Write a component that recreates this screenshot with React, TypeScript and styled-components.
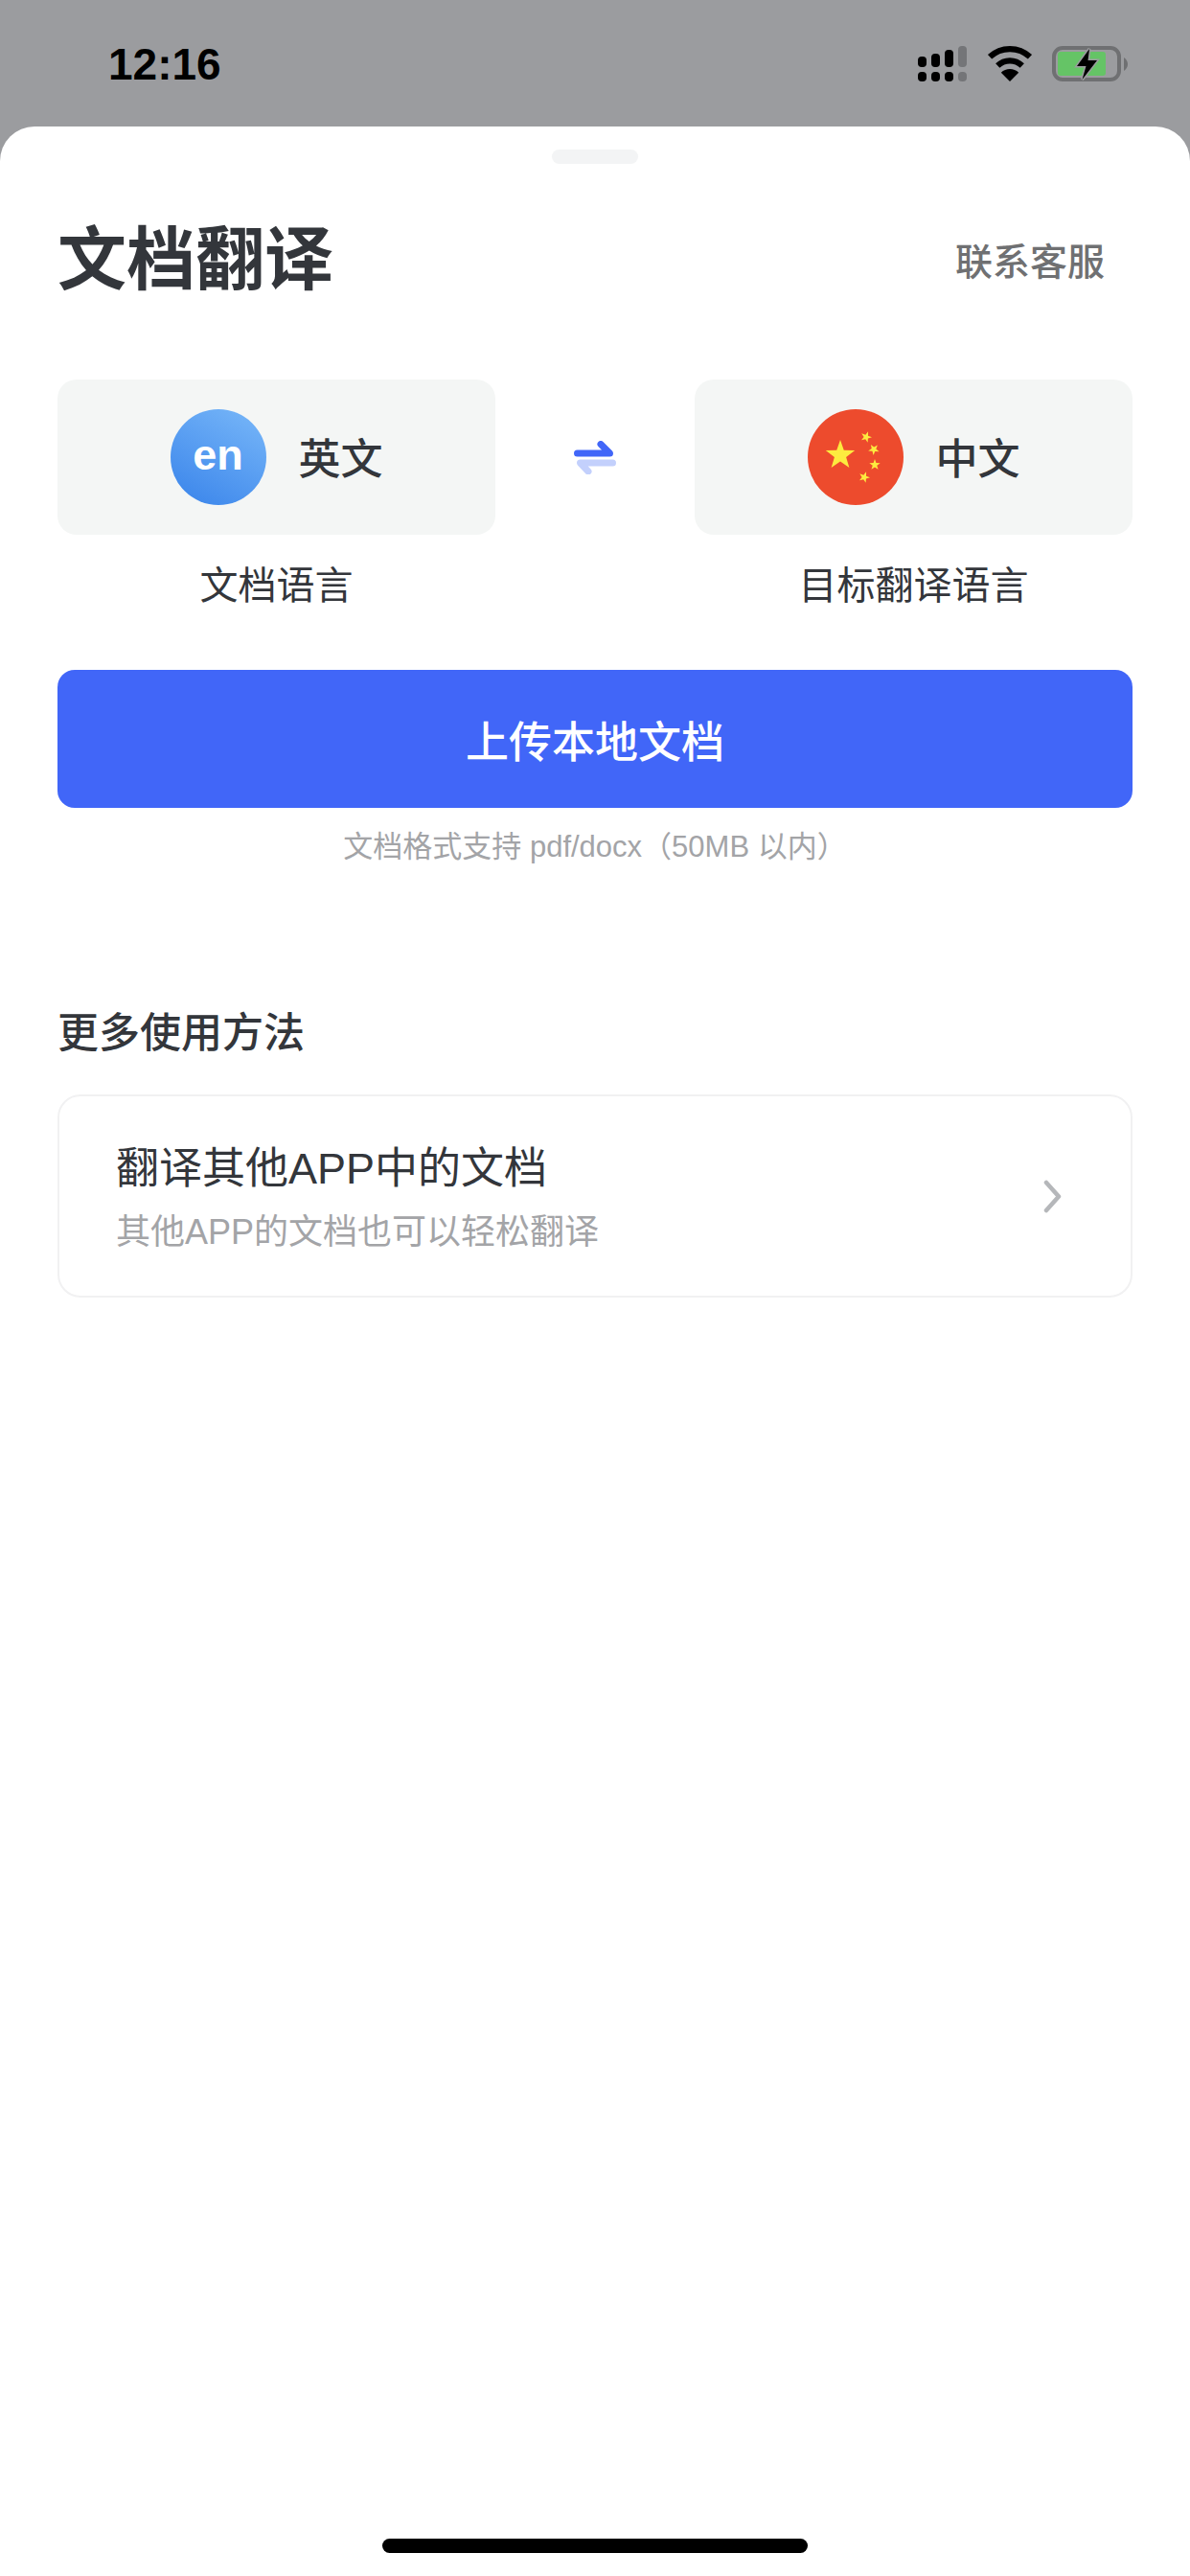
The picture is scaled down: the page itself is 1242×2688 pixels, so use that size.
import React from "react";
import styled, { createGlobalStyle } from "styled-components";

const UI_FONT = `"Liberation Sans", "Noto Sans CJK SC", sans-serif`;

const GlobalStyle = createGlobalStyle`
  html, body {
    margin: 0;
    padding: 0;
    background: #9b9c9f;
    font-family: ${UI_FONT};
  }
`;

const Page = styled.div`
  width: 1242px;
  height: 2688px;
  display: flex;
  flex-direction: column;
  background: #9b9c9f;
  overflow: hidden;
`;

const StatusBar = styled.div`
  height: 132px;
  box-sizing: border-box;
  padding: 40px 64px 0 113px;
  display: flex;
  justify-content: space-between;
  align-items: flex-start;
  flex-shrink: 0;
`;

const Clock = styled.div`
  font-size: 46px;
  font-weight: 700;
  line-height: 54px;
  color: #000;
`;

const StatusIcons = styled.div`
  display: flex;
  align-items: flex-start;
  gap: 20px;
  margin-top: 8px;
`;

const Sheet = styled.div`
  flex: 1;
  display: flex;
  flex-direction: column;
  background: #fff;
  border-radius: 36px 36px 0 0;
  padding: 24px 60px 24px;
`;

const Handle = styled.div`
  width: 90px;
  height: 15px;
  border-radius: 8px;
  background: #f3f4f5;
  align-self: center;
  flex-shrink: 0;
`;

const Header = styled.div`
  margin-top: 55px;
  display: flex;
  justify-content: space-between;
  align-items: center;
  height: 90px;
  padding-right: 29px;
`;

const Title = styled.h1`
  margin: 0;
  font-size: 72px;
  font-weight: 700;
  line-height: 90px;
  color: #33363b;
`;

const ContactLink = styled.a`
  font-size: 39px;
  font-weight: 500;
  line-height: 50px;
  color: #6f7072;
  padding-top: 6px;
`;

const LangRow = styled.div`
  margin-top: 80px;
  display: grid;
  grid-template-columns: 457px 1fr 457px;
`;

const LangColumn = styled.div`
  display: flex;
  flex-direction: column;
  align-items: center;
`;

const LangCard = styled.div`
  width: 100%;
  height: 162px;
  border-radius: 20px;
  background: #f4f6f5;
  display: flex;
  align-items: center;
  justify-content: center;
  gap: 34px;
`;

const LangBadge = styled.div`
  width: 100px;
  height: 100px;
  border-radius: 50%;
  background: linear-gradient(30deg, #3883ea 0%, #79b8f9 100%);
  display: flex;
  align-items: center;
  justify-content: center;
  font-size: 45px;
  font-weight: 700;
  line-height: 1;
  padding-bottom: 6px;
  box-sizing: border-box;
  color: #fff;
`;

const LangName = styled.span`
  font-size: 44px;
  font-weight: 500;
  line-height: 56px;
  color: #33363b;
  padding-top: 6px;
`;

const LangLabel = styled.div`
  margin-top: 28px;
  font-size: 40px;
  line-height: 50px;
  color: #33363b;
`;

const SwapCell = styled.div`
  height: 162px;
  display: flex;
  align-items: center;
  justify-content: center;
`;

const UploadButton = styled.button`
  margin-top: 63px;
  width: 100%;
  height: 144px;
  border: none;
  border-radius: 18px;
  background: #4166f8;
  color: #fff;
  font-family: ${UI_FONT};
  font-size: 45px;
  font-weight: 500;
  flex-shrink: 0;
`;

const FormatHint = styled.div`
  margin-top: 20px;
  text-align: center;
  font-size: 31px;
  line-height: 42px;
  color: #a3a4a7;
`;

const SectionTitle = styled.h2`
  margin: 0;
  margin-top: 146px;
  font-size: 43px;
  font-weight: 500;
  line-height: 54px;
  color: #33363b;
`;

const MethodCard = styled.div`
  margin-top: 37px;
  height: 212px;
  box-sizing: border-box;
  border: 2px solid #f1f1f2;
  border-radius: 24px;
  padding: 0 72px 0 59px;
  display: flex;
  align-items: center;
  justify-content: space-between;
  flex-shrink: 0;
`;

const MethodText = styled.div`
  display: flex;
  flex-direction: column;
  gap: 15px;
  padding-top: 5px;
`;

const MethodTitle = styled.div`
  font-size: 45px;
  line-height: 56px;
  color: #33363b;
`;

const MethodSub = styled.div`
  font-size: 36px;
  line-height: 46px;
  color: #a3a4a7;
`;

const HomeBar = styled.div`
  margin-top: auto;
  width: 444px;
  height: 15px;
  border-radius: 8px;
  background: #000;
  align-self: center;
  flex-shrink: 0;
`;

const SIGNAL_BARS = [
  { x: 0, top: 11, fill: "#000" },
  { x: 14, top: 8, fill: "#000" },
  { x: 28, top: 4, fill: "#000" },
  { x: 42, top: 0, fill: "#747578" },
];

function SignalIcon() {
  return (
    <svg width="52" height="38" viewBox="0 0 52 38">
      {SIGNAL_BARS.map((bar) => (
        <g key={bar.x} fill={bar.fill}>
          <rect x={bar.x} y={bar.top} width="9" height={22 - bar.top} rx="4" />
          <rect x={bar.x} y="27" width="9" height="10" rx="4" />
        </g>
      ))}
    </svg>
  );
}

function WifiIcon() {
  return (
    <svg width="48" height="37" viewBox="0 0 47 36" fill="none" stroke="#000" strokeWidth="6">
      <path d="M3 11A30 30 0 0 1 44 11" />
      <path d="M11 20A18 18 0 0 1 36 20" />
      <path d="M14.5 27A13 13 0 0 1 32.5 27L23.5 36Z" fill="#000" stroke="none" />
    </svg>
  );
}

function BatteryIcon() {
  return (
    <svg width="80" height="38" viewBox="0 0 80 38">
      <rect x="2" y="2" width="68" height="33" rx="9" fill="none" stroke="#6f7072" strokeWidth="4" />
      <rect x="6" y="6" width="50" height="25" rx="3" fill="#65c466" />
      <path d="M75 12q4 3 4 7t-4 7z" fill="#6f7072" />
      <path
        d="M39 3L26 21H35.500L31.500 35L47 15H37.500Z"
        fill="#000"
        stroke="#9b9c9f"
        strokeWidth="3"
        paintOrder="stroke"
      />
    </svg>
  );
}

function SwapIcon() {
  return (
    <svg width="44" height="35" viewBox="0 0 44 35" fill="none" strokeWidth="7" strokeLinecap="round" strokeLinejoin="round">
      <path d="M3.500 13H37.500L28 3.500" stroke="#4166f8" />
      <path d="M40.500 23H6.500L15 32" stroke="#c3d0fc" />
    </svg>
  );
}

function ChevronIcon() {
  return (
    <svg width="19" height="35" viewBox="0 0 19 35" fill="none" stroke="#b5b7ba" strokeWidth="4.500" strokeLinecap="round" strokeLinejoin="round">
      <path d="M3 3L16 17.500L3 32" />
    </svg>
  );
}

function starPoints(cx: number, cy: number, r: number, rot = 0): string {
  const pts: string[] = [];
  for (let i = 0; i < 10; i++) {
    const radius = i % 2 === 0 ? r : r * 0.4;
    const angle = ((-90 + rot + i * 36) * Math.PI) / 180;
    pts.push(`${(cx + radius * Math.cos(angle)).toFixed(2)},${(cy + radius * Math.sin(angle)).toFixed(2)}`);
  }
  return pts.join(" ");
}

const SMALL_STARS = [
  { x: 61, y: 29, rot: 20 },
  { x: 69, y: 42, rot: 40 },
  { x: 70, y: 58, rot: 0 },
  { x: 59, y: 71, rot: 20 },
];

function ChinaFlag() {
  return (
    <svg width="100" height="100" viewBox="0 0 100 100">
      <circle cx="50" cy="50" r="50" fill="#ed4b2d" />
      <polygon points={starPoints(34, 48, 16)} fill="#fdeb3f" />
      {SMALL_STARS.map((s) => (
        <polygon key={s.y} points={starPoints(s.x, s.y, 6, s.rot)} fill="#fdeb3f" />
      ))}
    </svg>
  );
}

export default function App() {
  return (
    <Page>
      <GlobalStyle />
      <StatusBar>
        <Clock>12:16</Clock>
        <StatusIcons>
          <SignalIcon />
          <WifiIcon />
          <BatteryIcon />
        </StatusIcons>
      </StatusBar>
      <Sheet>
        <Handle />
        <Header>
          <Title>文档翻译</Title>
          <ContactLink>联系客服</ContactLink>
        </Header>
        <LangRow>
          <LangColumn>
            <LangCard>
              <LangBadge>en</LangBadge>
              <LangName>英文</LangName>
            </LangCard>
            <LangLabel>文档语言</LangLabel>
          </LangColumn>
          <SwapCell>
            <SwapIcon />
          </SwapCell>
          <LangColumn>
            <LangCard>
              <ChinaFlag />
              <LangName>中文</LangName>
            </LangCard>
            <LangLabel>目标翻译语言</LangLabel>
          </LangColumn>
        </LangRow>
        <UploadButton>上传本地文档</UploadButton>
        <FormatHint>文档格式支持 pdf/docx（50MB 以内）</FormatHint>
        <SectionTitle>更多使用方法</SectionTitle>
        <MethodCard>
          <MethodText>
            <MethodTitle>翻译其他APP中的文档</MethodTitle>
            <MethodSub>其他APP的文档也可以轻松翻译</MethodSub>
          </MethodText>
          <ChevronIcon />
        </MethodCard>
        <HomeBar />
      </Sheet>
    </Page>
  );
}
